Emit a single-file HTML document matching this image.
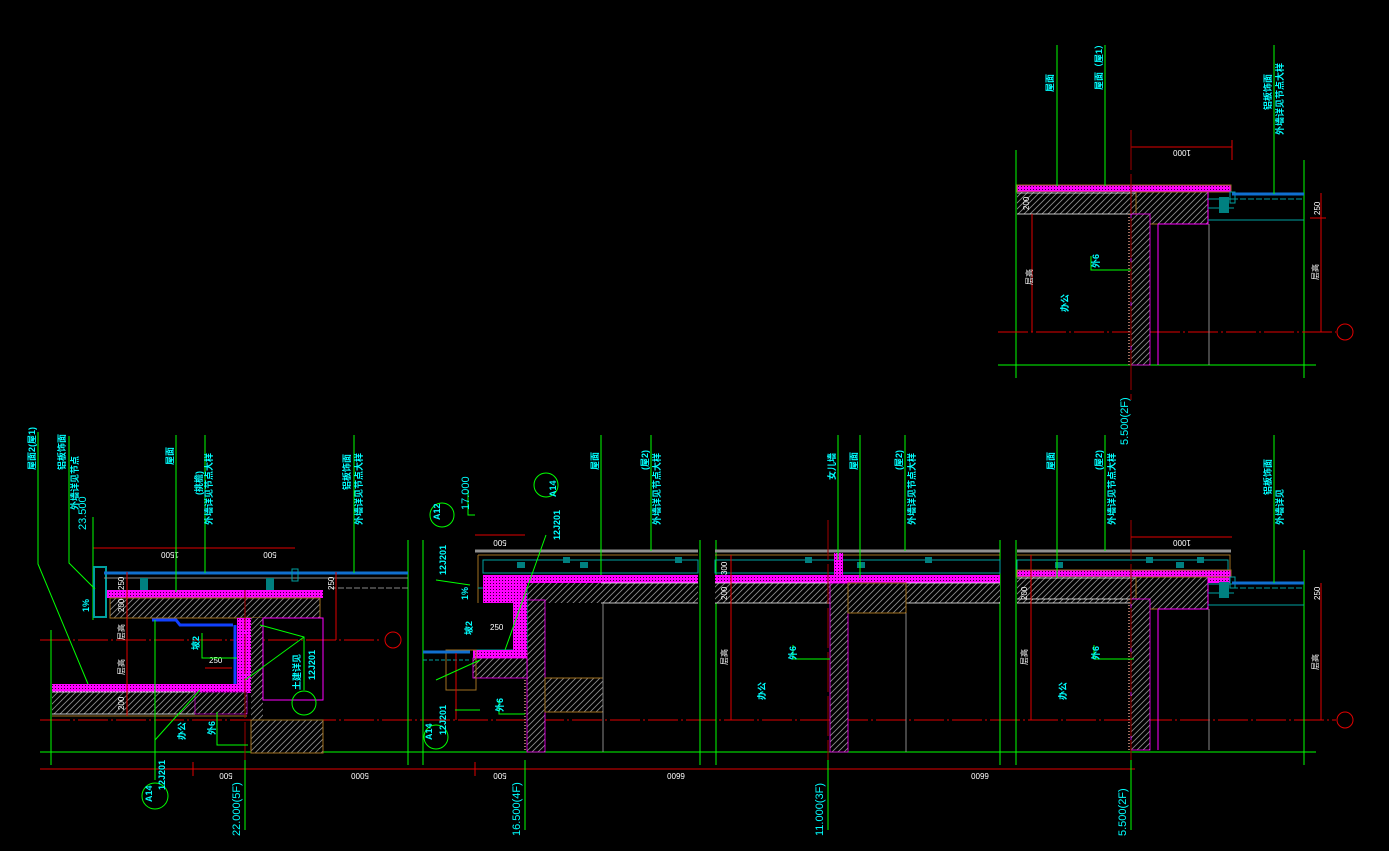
<!DOCTYPE html>
<html><head><meta charset="utf-8"><style>
html,body{margin:0;padding:0;background:#000;width:1389px;height:851px;overflow:hidden}
svg{display:block}
text{font-family:"Liberation Sans","Noto Sans CJK SC",sans-serif}
.c{fill:#00ffff;font-size:9px;font-weight:bold}
.w{fill:#fff;font-size:8px}
.l{fill:#00ffff;font-size:11px}
</style></head><body>
<svg width="1389" height="851" viewBox="0 0 1389 851" xmlns="http://www.w3.org/2000/svg">
<defs>
<pattern id="h" width="6" height="6" patternUnits="userSpaceOnUse"><rect width="6" height="6" fill="#000"/><path d="M0 6L6 0M-2 2L2 -2M4 8L8 4" stroke="#8a8a8a" stroke-width="0.9"/></pattern>
<pattern id="m" width="3" height="3" patternUnits="userSpaceOnUse"><rect width="3" height="3" fill="#ff00ff"/><rect x="1" y="1" width="1" height="1" fill="#300030"/></pattern>
<g id="bayTop">
<rect x="0" y="0" width="214" height="7" fill="url(#m)" stroke="#a07020" stroke-width="1"/>
<rect x="0" y="7" width="119" height="22" fill="url(#h)"/>
<line x1="0" y1="8" x2="123" y2="8" stroke="#fff" stroke-width="0.8"/>
<line x1="0" y1="29" x2="123" y2="29" stroke="#fff" stroke-width="0.8"/>
<rect x="119" y="7" width="72" height="32" fill="url(#h)" stroke="#a07020"/>
<path d="M141 39V180 M191 7V39H141" stroke="#ff00ff" fill="none"/>
<rect x="114" y="29" width="19" height="151" fill="url(#h)" stroke="#ff00ff" stroke-width="0.8"/>
<line x1="112" y1="29" x2="112" y2="180" stroke="#a07060" stroke-width="2" stroke-dasharray="1 2"/>
<line x1="192" y1="39" x2="192" y2="180" stroke="#888"/>
<path d="M191 14h24 M191 23h26 M191 35h96" stroke="#00a0a0"/>
<rect x="202" y="12" width="10" height="16" fill="#008080"/>
<rect x="213" y="7" width="5" height="11" fill="none" stroke="#00a0a0"/>
</g>
</defs>

<g>
<line x1="1016" y1="150" x2="1016" y2="378" stroke="#00ff00"/>
<line x1="1304" y1="160" x2="1304" y2="378" stroke="#00ff00"/>
<line x1="998" y1="365" x2="1316" y2="365" stroke="#00ff00"/>
<line x1="998" y1="332" x2="1336" y2="332" stroke="#e00000" stroke-dasharray="30 3 2 3"/>
<circle cx="1345" cy="332" r="8" fill="none" stroke="#e00000"/>
<use href="#bayTop" x="1017" y="185"/>
<line x1="1232" y1="194" x2="1304" y2="194" stroke="#1070d0" stroke-width="3"/>
<line x1="1232" y1="199" x2="1304" y2="199" stroke="#00a0a0" stroke-dasharray="6 2"/>
<line x1="1032" y1="214" x2="1032" y2="332" stroke="#e00000"/>
<line x1="1321" y1="193" x2="1321" y2="332" stroke="#e00000"/>
<line x1="1310" y1="218" x2="1326" y2="218" stroke="#e00000"/>
<line x1="1131" y1="147" x2="1232" y2="147" stroke="#e00000"/>
<line x1="1131" y1="130" x2="1131" y2="160" stroke="#e00000"/>
<line x1="1232" y1="140" x2="1232" y2="160" stroke="#e00000"/>
<line x1="1131" y1="130" x2="1131" y2="400" stroke="#a00000" stroke-dasharray="40 4"/>
<text class="w" transform="translate(1182 150) rotate(180)" text-anchor="middle">1000</text>
<line x1="1057" y1="45" x2="1057" y2="186" stroke="#00ff00"/>
<line x1="1105" y1="45" x2="1105" y2="186" stroke="#00ff00"/>
<line x1="1274" y1="45" x2="1274" y2="194" stroke="#00ff00"/>
<path d="M1091 256v14h40" stroke="#00ff00" fill="none"/>
<text class="c" transform="translate(1053 92) rotate(-90)">屋面</text>
<text class="c" transform="translate(1102 90) rotate(-90)">屋面（屋1）</text>
<text class="c" transform="translate(1271 110) rotate(-90)">铝板饰面</text>
<text class="c" transform="translate(1283 135) rotate(-90)">外墙详见节点大样</text>
<text class="w" transform="translate(1029 210) rotate(-90)">200</text>
<text class="w" transform="translate(1320 215) rotate(-90)">250</text>
<text class="w" transform="translate(1032 285) rotate(-90)">层高</text>
<text class="w" transform="translate(1318 280) rotate(-90)">层高</text>
<text class="c" transform="translate(1099 268) rotate(-90)">外6</text>
<text class="c" transform="translate(1068 312) rotate(-90)">办公</text>
<text class="l" transform="translate(1128 445) rotate(-90)">5.500(2F)</text>
</g>

<line x1="40" y1="752" x2="1316" y2="752" stroke="#00ff00"/>
<line x1="40" y1="769" x2="1135" y2="769" stroke="#e00000"/>
<g stroke="#e00000"><line x1="193" y1="762" x2="193" y2="776"/><line x1="245" y1="762" x2="245" y2="776"/><line x1="475" y1="762" x2="475" y2="776"/><line x1="525" y1="762" x2="525" y2="776"/><line x1="828" y1="762" x2="828" y2="776"/><line x1="1131" y1="762" x2="1131" y2="776"/></g>
<g class="w"><text transform="translate(226 773) rotate(180)" text-anchor="middle">500</text><text transform="translate(360 773) rotate(180)" text-anchor="middle">5000</text><text transform="translate(500 773) rotate(180)" text-anchor="middle">500</text><text transform="translate(676 773) rotate(180)" text-anchor="middle">6600</text><text transform="translate(980 773) rotate(180)" text-anchor="middle">6600</text></g>
<line x1="40" y1="720" x2="1336" y2="720" stroke="#e00000" stroke-dasharray="30 3 2 3"/>
<circle cx="1345" cy="720" r="8" fill="none" stroke="#e00000"/>
<line x1="40" y1="640" x2="382" y2="640" stroke="#e00000" stroke-dasharray="30 3 2 3"/>
<circle cx="393" cy="640" r="8" fill="none" stroke="#e00000"/>

<g>
<line x1="716" y1="540" x2="716" y2="765" stroke="#00ff00"/>
<line x1="700" y1="540" x2="700" y2="765" stroke="#00ff00"/>
<line x1="1016" y1="540" x2="1016" y2="765" stroke="#00ff00"/>
<line x1="1000" y1="540" x2="1000" y2="765" stroke="#00ff00"/>
<line x1="1304" y1="550" x2="1304" y2="765" stroke="#00ff00"/>
<line x1="408" y1="540" x2="408" y2="765" stroke="#00ff00"/>
<line x1="423" y1="540" x2="423" y2="765" stroke="#00ff00"/>
<path d="M475 551H698M715 551H1000M1017 551H1231" stroke="#909090" stroke-width="3"/>
<path d="M478 555V603 M478 555H698 M715 555H1000 M1017 555H1230V580" stroke="#a07020" fill="none"/>
<path d="M483 560H698V573H483Z M715 560H1000V573H715Z M1017 560H1228V573H1017Z" stroke="#00a0a0" fill="none"/>
<g fill="#008080"><rect x="517" y="562" width="8" height="6"/><rect x="563" y="557" width="7" height="6"/><rect x="580" y="562" width="8" height="6"/><rect x="675" y="557" width="7" height="6"/><rect x="805" y="557" width="7" height="6"/><rect x="857" y="562" width="8" height="6"/><rect x="925" y="557" width="7" height="6"/><rect x="1055" y="562" width="8" height="6"/><rect x="1146" y="557" width="7" height="6"/><rect x="1176" y="562" width="8" height="6"/><rect x="1197" y="557" width="7" height="6"/></g>
<rect x="483" y="575" width="215" height="8" fill="url(#m)"/>
<rect x="715" y="575" width="285" height="8" fill="url(#m)"/>
<rect x="1017" y="575" width="213" height="8" fill="url(#m)"/>
<rect x="834" y="553" width="9" height="28" fill="url(#m)"/>
<rect x="488" y="583" width="210" height="20" fill="url(#h)"/>
<rect x="715" y="583" width="285" height="20" fill="url(#h)"/>
<rect x="1017" y="583" width="119" height="20" fill="url(#h)"/>
<path d="M601 583H698M715 583H1000M1017 583H1136M601 603H698M715 603H1000M1017 603H1136" stroke="#fff" stroke-width="0.7"/>
<rect x="527" y="600" width="18" height="152" fill="url(#h)" stroke="#ff00ff" stroke-width="0.8"/>
<line x1="525" y1="605" x2="525" y2="752" stroke="#a07060" stroke-width="2" stroke-dasharray="1 2"/>
<rect x="545" y="678" width="58" height="34" fill="url(#h)" stroke="#a07020"/>
<line x1="603" y1="603" x2="603" y2="752" stroke="#888"/>
<rect x="830" y="583" width="18" height="169" fill="url(#h)" stroke="#ff00ff" stroke-width="0.8"/>
<rect x="848" y="583" width="58" height="30" fill="url(#h)" stroke="#a07020"/>
<line x1="906" y1="613" x2="906" y2="752" stroke="#888"/>
<use href="#bayTop" x="1017" y="575" transform="translate(0 -5)"/>
<line x1="1232" y1="583" x2="1304" y2="583" stroke="#1070d0" stroke-width="3"/>
<line x1="1232" y1="588" x2="1304" y2="588" stroke="#00a0a0" stroke-dasharray="6 2"/>
<line x1="1321" y1="583" x2="1321" y2="720" stroke="#e00000"/>
<line x1="731" y1="555" x2="731" y2="720" stroke="#e00000"/>
<line x1="1031" y1="555" x2="1031" y2="720" stroke="#e00000"/>
<line x1="828" y1="520" x2="828" y2="800" stroke="#a00000" stroke-dasharray="40 4"/>
<line x1="1131" y1="520" x2="1131" y2="800" stroke="#a00000" stroke-dasharray="40 4"/>
<line x1="1131" y1="537" x2="1232" y2="537" stroke="#e00000"/>
<text class="w" transform="translate(1182 540) rotate(180)" text-anchor="middle">1000</text>
<line x1="475" y1="535" x2="525" y2="535" stroke="#e00000"/>
<text class="w" transform="translate(500 540) rotate(180)" text-anchor="middle">500</text>
<g stroke="#00ff00">
<line x1="601" y1="435" x2="601" y2="575"/><line x1="651" y1="435" x2="651" y2="551"/>
<line x1="860" y1="435" x2="860" y2="578"/><line x1="905" y1="435" x2="905" y2="551"/>
<line x1="1057" y1="435" x2="1057" y2="578"/><line x1="1105" y1="435" x2="1105" y2="551"/>
<line x1="1274" y1="435" x2="1274" y2="583"/><line x1="838" y1="435" x2="838" y2="560"/>
<path d="M793 645v14h37M1094 645v14h40M499 700v14h26"/>
</g>
<g class="c">
<text transform="translate(598 470) rotate(-90)">屋面</text>
<text transform="translate(648 470) rotate(-90)">(屋2)</text>
<text transform="translate(660 525) rotate(-90)">外墙详见节点大样</text>
<text transform="translate(857 470) rotate(-90)">屋面</text>
<text transform="translate(902 470) rotate(-90)">(屋2)</text>
<text transform="translate(915 525) rotate(-90)">外墙详见节点大样</text>
<text transform="translate(835 480) rotate(-90)">女儿墙</text>
<text transform="translate(1054 470) rotate(-90)">屋面</text>
<text transform="translate(1102 470) rotate(-90)">(屋2)</text>
<text transform="translate(1115 525) rotate(-90)">外墙详见节点大样</text>
<text transform="translate(1271 495) rotate(-90)">铝板饰面</text>
<text transform="translate(1283 525) rotate(-90)">外墙详见</text>
<text transform="translate(796 660) rotate(-90)">外6</text>
<text transform="translate(1099 660) rotate(-90)">外6</text>
<text transform="translate(503 712) rotate(-90)">外6</text>
<text transform="translate(765 700) rotate(-90)">办公</text>
<text transform="translate(1066 700) rotate(-90)">办公</text>
</g>
<g class="w"><text transform="translate(727 600) rotate(-90)">200</text><text transform="translate(1027 600) rotate(-90)">200</text><text transform="translate(727 575) rotate(-90)">300</text><text transform="translate(1320 600) rotate(-90)">250</text><text transform="translate(727 665) rotate(-90)">层高</text><text transform="translate(1027 665) rotate(-90)">层高</text><text transform="translate(1318 670) rotate(-90)">层高</text></g>
</g>

<g>
<path d="M478 588H527V650H473" stroke="#00a0a0" fill="none"/>
<rect x="483" y="583" width="44" height="20" fill="url(#m)"/>
<rect x="513" y="603" width="14" height="50" fill="url(#m)"/>
<rect x="473" y="650" width="54" height="8" fill="url(#m)"/>
<rect x="473" y="658" width="54" height="20" fill="url(#h)" stroke="#ff00ff" stroke-width="0.8"/>
<rect x="446" y="650" width="30" height="40" fill="none" stroke="#a07020"/>
<line x1="423" y1="652" x2="470" y2="652" stroke="#1070d0" stroke-width="3"/>
<line x1="423" y1="660" x2="470" y2="660" stroke="#00a0a0" stroke-dasharray="4 2"/>
<line x1="456" y1="653" x2="456" y2="720" stroke="#e00000"/>
<line x1="455" y1="710" x2="480" y2="710" stroke="#00ff00"/>
<circle cx="442" cy="515" r="12" fill="none" stroke="#00ff00"/>
<circle cx="436" cy="737" r="12" fill="none" stroke="#00ff00"/>
<circle cx="546" cy="485" r="12" fill="none" stroke="#00ff00"/>
<path d="M436 580L470 585 M546 535L505 650 M436 680L480 660" stroke="#00ff00"/>
<path d="M468 490V515H475" stroke="#00ff00" fill="none"/>
<text class="l" transform="translate(469 510) rotate(-90)">17.000</text>
<text class="c" transform="translate(440 520) rotate(-90)">A12</text>
<text class="c" transform="translate(556 497) rotate(-90)">A14</text>
<text class="c" transform="translate(446 575) rotate(-90)">12J201</text>
<text class="c" transform="translate(560 540) rotate(-90)">12J201</text>
<text class="c" transform="translate(446 735) rotate(-90)">12J201</text>
<text class="c" transform="translate(432 740) rotate(-90)">A14</text>
<text class="c" transform="translate(468 600) rotate(-90)">1%</text>
<text class="c" transform="translate(472 635) rotate(-90)">坡2</text>
<text class="w" transform="translate(490 630)">250</text>
</g>

<g>
<line x1="51" y1="630" x2="51" y2="765" stroke="#00ff00"/>
<line x1="93" y1="565" x2="93" y2="620" stroke="#00ff00"/>
<rect x="94" y="567" width="12" height="50" fill="none" stroke="#00a0a0" stroke-width="2"/>
<line x1="104" y1="573" x2="408" y2="573" stroke="#1070d0" stroke-width="3"/>
<line x1="104" y1="578" x2="408" y2="578" stroke="#888"/>
<line x1="330" y1="588" x2="408" y2="588" stroke="#888" stroke-dasharray="6 2"/>
<rect x="107" y="590" width="216" height="8" fill="url(#m)"/>
<rect x="110" y="598" width="210" height="20" fill="url(#h)" stroke="#a07020"/>
<rect x="140" y="578" width="8" height="12" fill="#008080"/><rect x="266" y="578" width="8" height="12" fill="#008080"/>
<rect x="292" y="569" width="6" height="12" fill="none" stroke="#00a0a0"/>
<path d="M152 620H176L180 625H233" stroke="#1040ff" stroke-width="3" fill="none"/>
<rect x="237" y="618" width="14" height="75" fill="url(#m)"/>
<path d="M235 625V686H205" stroke="#1040ff" stroke-width="3" fill="none"/>
<rect x="251" y="618" width="12" height="135" fill="url(#h)"/>
<rect x="263" y="618" width="60" height="82" fill="none" stroke="#ff00ff"/>
<rect x="251" y="720" width="72" height="33" fill="url(#h)" stroke="#a07020"/>
<rect x="52" y="684" width="195" height="8" fill="url(#m)"/>
<rect x="52" y="692" width="195" height="22" fill="url(#h)"/>
<line x1="52" y1="692" x2="195" y2="692" stroke="#fff" stroke-width="0.8"/>
<line x1="52" y1="714" x2="195" y2="714" stroke="#fff" stroke-width="0.8"/>
<line x1="52" y1="716" x2="247" y2="716" stroke="#a07020"/>
<rect x="195" y="692" width="52" height="22" fill="url(#h)" stroke="#ff00ff" stroke-width="0.6"/>
<line x1="245" y1="590" x2="245" y2="800" stroke="#a00000" stroke-dasharray="40 4"/>
<line x1="127" y1="572" x2="127" y2="716" stroke="#e00000"/>
<line x1="336" y1="572" x2="336" y2="640" stroke="#e00000"/>
<line x1="93" y1="548" x2="295" y2="548" stroke="#e00000"/>
<line x1="205" y1="668" x2="232" y2="668" stroke="#e00000"/>
<text class="w" transform="translate(170 552) rotate(180)" text-anchor="middle">1500</text>
<text class="w" transform="translate(270 552) rotate(180)" text-anchor="middle">500</text>
<text class="w" transform="translate(209 663)">250</text>
<g stroke="#00ff00" fill="none">
<path d="M38 432V564L88 684"/><path d="M69 436V563L95 589"/>
<line x1="176" y1="435" x2="176" y2="592"/><line x1="205" y1="435" x2="205" y2="573"/><line x1="354" y1="435" x2="354" y2="573"/>
<line x1="155" y1="620" x2="155" y2="780"/><line x1="93" y1="517" x2="93" y2="565"/>
<circle cx="155" cy="796" r="13"/><circle cx="304" cy="703" r="12"/>
<path d="M304 690V637L260 625 M304 637L245 680 M155 740L200 690 M202 633V658H237 M217 712V745H248"/>
<line x1="245" y1="760" x2="245" y2="830"/><line x1="525" y1="760" x2="525" y2="830"/><line x1="828" y1="760" x2="828" y2="830"/><line x1="1131" y1="760" x2="1131" y2="830"/>
</g>
<g class="c">
<text transform="translate(35 470) rotate(-90)">屋面2(屋1)</text>
<text transform="translate(65 470) rotate(-90)">铝板饰面</text>
<text transform="translate(78 510) rotate(-90)">外墙详见节点</text>
<text transform="translate(173 465) rotate(-90)">屋面</text>
<text transform="translate(202 495) rotate(-90)">(挑檐)</text>
<text transform="translate(212 525) rotate(-90)">外墙详见节点大样</text>
<text transform="translate(350 490) rotate(-90)">铝板饰面</text>
<text transform="translate(362 525) rotate(-90)">外墙详见节点大样</text>
<text transform="translate(89 612) rotate(-90)">1%</text>
<text transform="translate(199 650) rotate(-90)">坡2</text>
<text transform="translate(215 735) rotate(-90)">外6</text>
<text transform="translate(185 740) rotate(-90)">办公</text>
<text transform="translate(300 690) rotate(-90)">土建详见</text>
<text transform="translate(315 680) rotate(-90)">12J201</text>
<text transform="translate(165 790) rotate(-90)">12J201</text>
<text transform="translate(152 802) rotate(-90)">A14</text>
</g>
<g class="w"><text transform="translate(124 590) rotate(-90)">250</text><text transform="translate(124 612) rotate(-90)">200</text><text transform="translate(124 710) rotate(-90)">200</text><text transform="translate(124 640) rotate(-90)">层高</text><text transform="translate(124 675) rotate(-90)">层高</text><text transform="translate(334 590) rotate(-90)">250</text></g>
<text class="l" transform="translate(86 530) rotate(-90)">23.500</text>
<text class="l" transform="translate(240 836) rotate(-90)">22.000(5F)</text>
<text class="l" transform="translate(520 836) rotate(-90)">16.500(4F)</text>
<text class="l" transform="translate(823 836) rotate(-90)">11.000(3F)</text>
<text class="l" transform="translate(1126 836) rotate(-90)">5.500(2F)</text>
</g>
</svg>
</body></html>
